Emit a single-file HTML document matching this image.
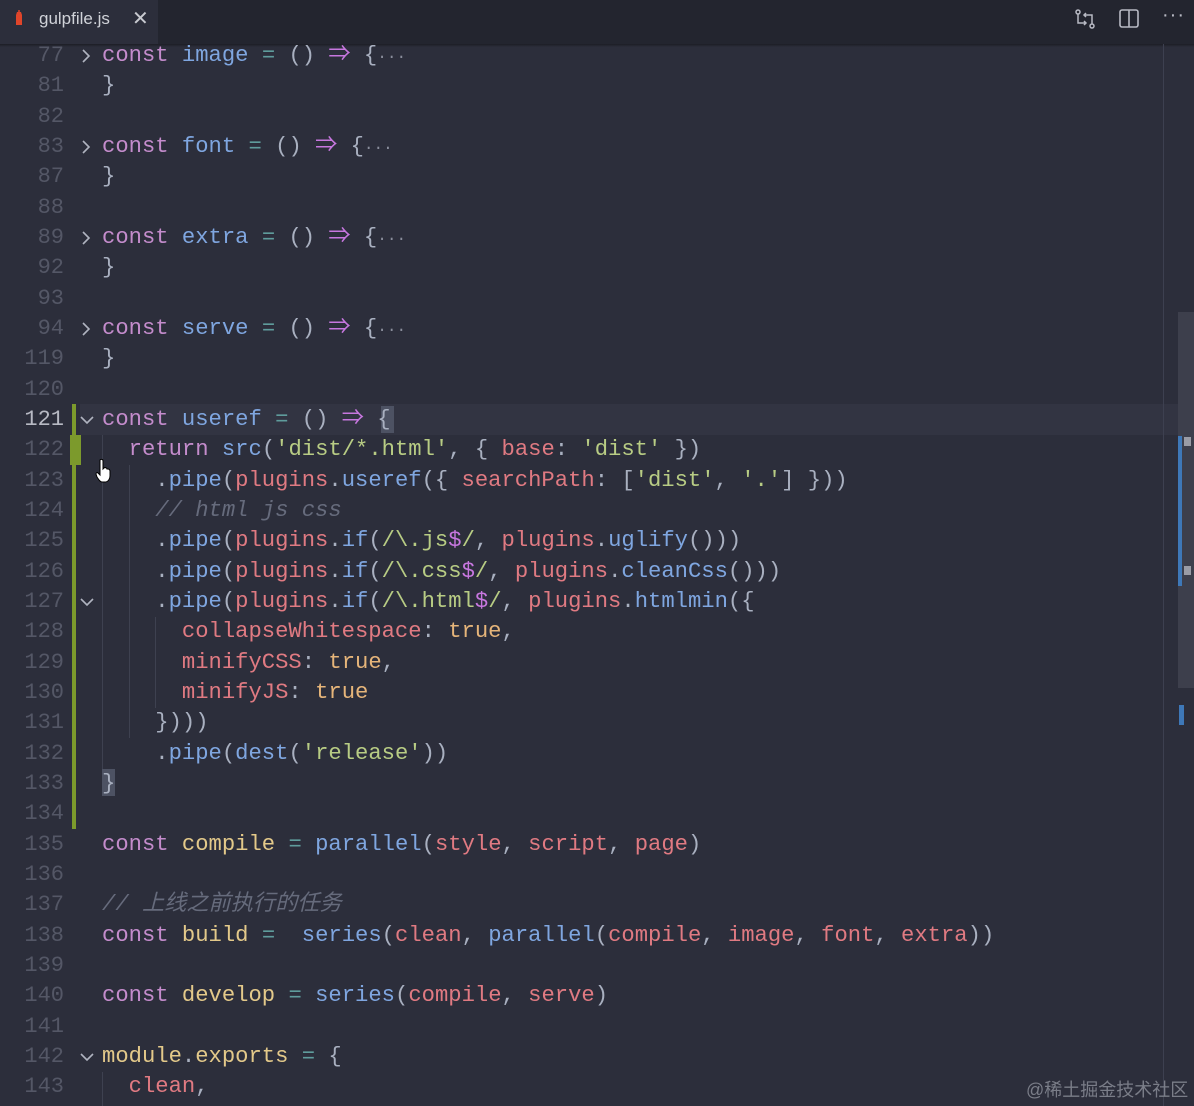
<!DOCTYPE html>
<html><head><meta charset="utf-8"><style>
html,body{margin:0;padding:0;}
body{width:1194px;height:1106px;background:#2c2e3b;overflow:hidden;position:relative;font-family:"Liberation Mono","Noto Sans CJK SC",monospace;}
.tabbar{position:absolute;left:0;top:0;width:1194px;height:44px;background:#23252f;}
.tab{position:absolute;left:0;top:0;width:158px;height:44px;background:#2c2e3b;}
.tab .name{position:absolute;left:39px;top:9px;font:17px "Liberation Sans",sans-serif;color:#d0d2d8;}
.tab .x{position:absolute;left:132px;top:6px;font:20px "Liberation Sans",sans-serif;color:#c8cad0;}
.shadow{position:absolute;left:0;top:44px;width:1194px;height:3px;background:linear-gradient(#1c1d25,#2c2e3b);}
.hl{position:absolute;left:80px;top:404px;width:1098px;height:31px;background:#323442;}
.line{position:absolute;left:0;width:1194px;height:30.33px;line-height:30.33px;font-size:22.2px;white-space:pre;}
.ln{position:absolute;right:1130px;color:#545766;font-size:22px;}
.ln.cur{color:#b8bac4;}
.code{position:absolute;left:102px;color:#a9b0c0;}
.k{color:#c48ccc}.f{color:#7fa6e0}.v{color:#e3c98a}.r{color:#e07a82}.s{color:#b8cc84}.o{color:#5f9c9c}.a{color:#c777df}.c{color:#666b7c;font-style:italic}.t{color:#e6b57a}.p{color:#a9b0c0}.d{color:#8a8e9c;font-size:16px}
.fold{position:absolute;left:79px;top:8px;}
.guide{position:absolute;width:1px;background:#3e4150;}
.green{position:absolute;background:#7c9a2c;}
.ruler{position:absolute;left:1163px;top:44px;width:1px;height:1062px;background:#3d4050;}
.sb{position:absolute;left:1178px;top:312px;width:16px;height:376px;background:#3d3f4c;}
</style></head><body>
<div class="tabbar">
 <div class="tab"><svg style="position:absolute;left:14px;top:10px" width="10" height="16"><path d="M3 2h4l1 3v10H2V5z" fill="#e0452a"/><path d="M5 0v4" stroke="#e0452a" stroke-width="1.5"/></svg><span class="name">gulpfile.js</span><span class="x">✕</span></div>
 <svg style="position:absolute;left:1074px;top:8px" width="22" height="22" fill="none" stroke="#b8bac4" stroke-width="1.5"><circle cx="4" cy="4" r="2"/><circle cx="18" cy="18" r="2"/><path d="M4 6v9h8M10 13l2 2-2 2M18 16V7h-8M12 5l-2 2 2 2"/></svg>
 <svg style="position:absolute;left:1119px;top:9px" width="20" height="19" fill="none" stroke="#b8bac4" stroke-width="1.6"><rect x="1" y="1" width="18" height="17" rx="2"/><path d="M10 1v17"/></svg>
 <div style="position:absolute;left:1162px;top:4px;color:#b8bac4;font:20px 'Liberation Sans',sans-serif;letter-spacing:1px">···</div>
</div>
<div class="shadow"></div>
<div class="hl"></div>
<div class="ruler"></div>
<div class="sb"></div>
<div style="position:absolute;left:1178px;top:436px;width:4px;height:150px;background:#3e78b8"></div>
<div style="position:absolute;left:1184px;top:437px;width:7px;height:9px;background:#9a9ca6"></div>
<div style="position:absolute;left:1184px;top:566px;width:7px;height:9px;background:#9a9ca6"></div>
<div style="position:absolute;left:1179px;top:705px;width:5px;height:20px;background:#3e78b8"></div>
<div class="green" style="left:72px;top:404px;width:4px;height:425px"></div>
<div class="green" style="left:70px;top:435px;width:11px;height:30px"></div>
<div class="guide" style="left:102px;top:435px;height:334px"></div>
<div class="guide" style="left:129px;top:465px;height:273px"></div>
<div class="guide" style="left:155px;top:617px;height:91px"></div>
<div class="guide" style="left:102px;top:1072px;height:34px"></div>
<div style="position:absolute;left:381px;top:406px;width:13px;height:27px;background:#4d5263"></div>
<div style="position:absolute;left:102px;top:769px;width:13px;height:27px;background:#4d5263"></div>

<div class="line" style="top:41px"><span class="ln">77</span><svg class="fold" width="14" height="14"><path d="M4 1l6 6-6 6" fill="none" stroke="#b0b4c0" stroke-width="1.6"/></svg><span class="code"><span class="k">const</span> <span class="f">image</span> <span class="o">=</span> () <span class="a">⇒</span> {<span class="d">···</span></span></div>
<div class="line" style="top:71.3px"><span class="ln">81</span><span class="code">}</span></div>
<div class="line" style="top:101.7px"><span class="ln">82</span></div>
<div class="line" style="top:132px"><span class="ln">83</span><svg class="fold" width="14" height="14"><path d="M4 1l6 6-6 6" fill="none" stroke="#b0b4c0" stroke-width="1.6"/></svg><span class="code"><span class="k">const</span> <span class="f">font</span> <span class="o">=</span> () <span class="a">⇒</span> {<span class="d">···</span></span></div>
<div class="line" style="top:162.3px"><span class="ln">87</span><span class="code">}</span></div>
<div class="line" style="top:192.7px"><span class="ln">88</span></div>
<div class="line" style="top:223px"><span class="ln">89</span><svg class="fold" width="14" height="14"><path d="M4 1l6 6-6 6" fill="none" stroke="#b0b4c0" stroke-width="1.6"/></svg><span class="code"><span class="k">const</span> <span class="f">extra</span> <span class="o">=</span> () <span class="a">⇒</span> {<span class="d">···</span></span></div>
<div class="line" style="top:253.3px"><span class="ln">92</span><span class="code">}</span></div>
<div class="line" style="top:283.7px"><span class="ln">93</span></div>
<div class="line" style="top:314px"><span class="ln">94</span><svg class="fold" width="14" height="14"><path d="M4 1l6 6-6 6" fill="none" stroke="#b0b4c0" stroke-width="1.6"/></svg><span class="code"><span class="k">const</span> <span class="f">serve</span> <span class="o">=</span> () <span class="a">⇒</span> {<span class="d">···</span></span></div>
<div class="line" style="top:344.3px"><span class="ln">119</span><span class="code">}</span></div>
<div class="line" style="top:374.7px"><span class="ln">120</span></div>
<div class="line" style="top:405px"><span class="ln cur">121</span><svg class="fold" width="16" height="14"><path d="M2 4l6 6 6-6" fill="none" stroke="#b0b4c0" stroke-width="1.6"/></svg><span class="code"><span class="k">const</span> <span class="f">useref</span> <span class="o">=</span> () <span class="a">⇒</span> {</span></div>
<div class="line" style="top:435.3px"><span class="ln">122</span><span class="code">  <span class="k">return</span> <span class="f">src</span>(<span class="s">'dist/*.html'</span>, { <span class="r">base</span>: <span class="s">'dist'</span> })</span></div>
<div class="line" style="top:465.7px"><span class="ln">123</span><span class="code">    .<span class="f">pipe</span>(<span class="r">plugins</span>.<span class="f">useref</span>({ <span class="r">searchPath</span>: [<span class="s">'dist'</span>, <span class="s">'.'</span>] }))</span></div>
<div class="line" style="top:496px"><span class="ln">124</span><span class="code">    <span class="c">// html js css</span></span></div>
<div class="line" style="top:526.3px"><span class="ln">125</span><span class="code">    .<span class="f">pipe</span>(<span class="r">plugins</span>.<span class="f">if</span>(<span class="s">/\.js</span><span class="a">$</span><span class="s">/</span>, <span class="r">plugins</span>.<span class="f">uglify</span>()))</span></div>
<div class="line" style="top:556.7px"><span class="ln">126</span><span class="code">    .<span class="f">pipe</span>(<span class="r">plugins</span>.<span class="f">if</span>(<span class="s">/\.css</span><span class="a">$</span><span class="s">/</span>, <span class="r">plugins</span>.<span class="f">cleanCss</span>()))</span></div>
<div class="line" style="top:587px"><span class="ln">127</span><svg class="fold" width="16" height="14"><path d="M2 4l6 6 6-6" fill="none" stroke="#b0b4c0" stroke-width="1.6"/></svg><span class="code">    .<span class="f">pipe</span>(<span class="r">plugins</span>.<span class="f">if</span>(<span class="s">/\.html</span><span class="a">$</span><span class="s">/</span>, <span class="r">plugins</span>.<span class="f">htmlmin</span>({</span></div>
<div class="line" style="top:617.3px"><span class="ln">128</span><span class="code">      <span class="r">collapseWhitespace</span>: <span class="t">true</span>,</span></div>
<div class="line" style="top:647.7px"><span class="ln">129</span><span class="code">      <span class="r">minifyCSS</span>: <span class="t">true</span>,</span></div>
<div class="line" style="top:678px"><span class="ln">130</span><span class="code">      <span class="r">minifyJS</span>: <span class="t">true</span></span></div>
<div class="line" style="top:708.3px"><span class="ln">131</span><span class="code">    })))</span></div>
<div class="line" style="top:738.7px"><span class="ln">132</span><span class="code">    .<span class="f">pipe</span>(<span class="f">dest</span>(<span class="s">'release'</span>))</span></div>
<div class="line" style="top:769px"><span class="ln">133</span><span class="code">}</span></div>
<div class="line" style="top:799.3px"><span class="ln">134</span></div>
<div class="line" style="top:829.7px"><span class="ln">135</span><span class="code"><span class="k">const</span> <span class="v">compile</span> <span class="o">=</span> <span class="f">parallel</span>(<span class="r">style</span>, <span class="r">script</span>, <span class="r">page</span>)</span></div>
<div class="line" style="top:860px"><span class="ln">136</span></div>
<div class="line" style="top:890.3px"><span class="ln">137</span><span class="code"><span class="c">// 上线之前执行的任务</span></span></div>
<div class="line" style="top:920.7px"><span class="ln">138</span><span class="code"><span class="k">const</span> <span class="v">build</span> <span class="o">=</span>  <span class="f">series</span>(<span class="r">clean</span>, <span class="f">parallel</span>(<span class="r">compile</span>, <span class="r">image</span>, <span class="r">font</span>, <span class="r">extra</span>))</span></div>
<div class="line" style="top:951px"><span class="ln">139</span></div>
<div class="line" style="top:981.3px"><span class="ln">140</span><span class="code"><span class="k">const</span> <span class="v">develop</span> <span class="o">=</span> <span class="f">series</span>(<span class="r">compile</span>, <span class="r">serve</span>)</span></div>
<div class="line" style="top:1011.7px"><span class="ln">141</span></div>
<div class="line" style="top:1042px"><span class="ln">142</span><svg class="fold" width="16" height="14"><path d="M2 4l6 6 6-6" fill="none" stroke="#b0b4c0" stroke-width="1.6"/></svg><span class="code"><span class="v">module</span>.<span class="v">exports</span> <span class="o">=</span> {</span></div>
<div class="line" style="top:1072.3px"><span class="ln">143</span><span class="code">  <span class="r">clean</span>,</span></div>
<svg style="position:absolute;left:94px;top:458px" width="18" height="26"><path d="M6 2c1-1 3-1 3 1v8l1-1c1-1 3 0 3 1l1 0c1 0 2 1 2 2v5c0 3-2 6-5 6H8c-2 0-3-2-5-5l-1-3c0-1 1-2 2-1l2 2V3z" fill="#fff" stroke="#000" stroke-width="1"/></svg>
<div style="position:absolute;left:1026px;top:1076px;font:18px 'Liberation Sans','Noto Sans CJK SC',sans-serif;color:#7a7d88">@稀土掘金技术社区</div>
</body></html>
